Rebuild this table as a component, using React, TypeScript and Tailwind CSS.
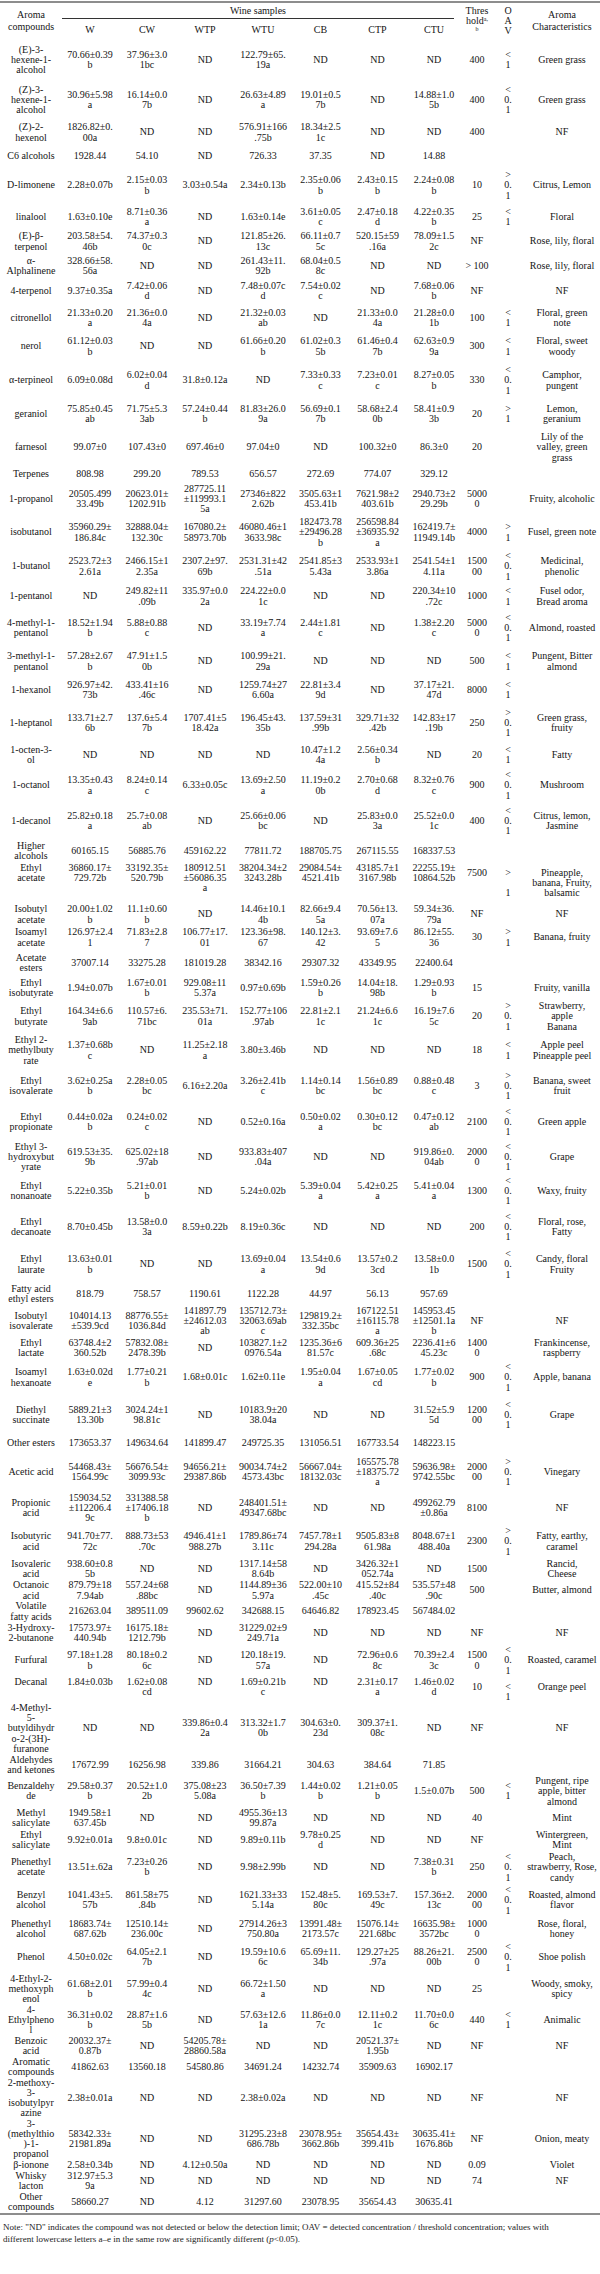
type Row = { h: number; c: string[]; top?: boolean }

const rows: Row[] = [
  { h: 42, c: ["(E)-3-\nhexene-1-\nalcohol", "70.66±0.39\nb", "37.96±3.0\n1bc", "ND", "122.79±65.\n19a", "ND", "ND", "ND", "400", "<\n1", "Green grass"] },
  { h: 38, c: ["(Z)-3-\nhexene-1-\nalcohol", "30.96±5.98\na", "16.14±0.0\n7b", "ND", "26.63±4.89\na", "19.01±0.5\n7b", "ND", "14.88±1.0\n5b", "400", "<\n0.\n1", "Green grass"] },
  { h: 27, c: ["(Z)-2-\nhexenol", "1826.82±0.\n00a", "ND", "ND", "576.91±166\n.75b", "18.34±2.5\n1c", "ND", "ND", "400", "", "NF"] },
  { h: 20, c: ["C6 alcohols", "1928.44", "54.10", "ND", "726.33", "37.35", "ND", "14.88", "", "", ""] },
  { h: 39, c: ["D-limonene", "2.28±0.07b", "2.15±0.03\nb", "3.03±0.54a", "2.34±0.13b", "2.35±0.06\nb", "2.43±0.15\nb", "2.24±0.08\nb", "10", ">\n0.\n1", "Citrus, Lemon"] },
  { h: 24, c: ["linalool", "1.63±0.10e", "8.71±0.36\na", "ND", "1.63±0.14e", "3.61±0.05\nc", "2.47±0.18\nd", "4.22±0.35\nb", "25", "<\n1", "Floral"] },
  { h: 25, c: ["(E)-β-\nterpenol", "203.58±54.\n46b", "74.37±0.3\n0c", "ND", "121.85±26.\n13c", "66.11±0.7\n5c", "520.15±59\n.16a", "78.09±1.5\n2c", "NF", "", "Rose, lily, floral"] },
  { h: 24, c: ["α-\nAlphalinene", "328.66±58.\n56a", "ND", "ND", "261.43±11.\n92b", "68.04±0.5\n8c", "ND", "ND", "> 100", "", "Rose, lily, floral"] },
  { h: 26, c: ["4-terpenol", "9.37±0.35a", "7.42±0.06\nd", "ND", "7.48±0.07c\nd", "7.54±0.02\nc", "ND", "7.68±0.06\nb", "NF", "", "NF"] },
  { h: 28, c: ["citronellol", "21.33±0.20\na", "21.36±0.0\n4a", "ND", "21.32±0.03\nab", "ND", "21.33±0.0\n4a", "21.28±0.0\n1b", "100", "<\n1", "Floral, green\nnote"] },
  { h: 29, c: ["nerol", "61.12±0.03\nb", "ND", "ND", "61.66±0.20\nb", "61.02±0.3\n5b", "61.46±0.4\n7b", "62.63±0.9\n9a", "300", "<\n1", "Floral, sweet\nwoody"] },
  { h: 39, c: ["α-terpineol", "6.09±0.08d", "6.02±0.04\nd", "31.8±0.12a", "ND", "7.33±0.33\nc", "7.23±0.01\nc", "8.27±0.05\nb", "330", "<\n0.\n1", "Camphor,\npungent"] },
  { h: 28, c: ["geraniol", "75.85±0.45\nab", "71.75±5.3\n3ab", "57.24±0.44\nb", "81.83±26.0\n9a", "56.69±0.1\n7b", "58.68±2.4\n0b", "58.41±0.9\n3b", "20", ">\n1", "Lemon,\ngeranium"] },
  { h: 39, c: ["farnesol", "99.07±0", "107.43±0", "697.46±0", "97.04±0", "ND", "100.32±0", "86.3±0", "20", "", "Lily of the\nvalley, green\ngrass"] },
  { h: 15, c: ["Terpenes", "808.98", "299.20", "789.53", "656.57", "272.69", "774.07", "329.12", "", "", ""] },
  { h: 34, c: ["1-propanol", "20505.499\n33.49b", "20623.01±\n1202.91b", "287725.11\n±119993.1\n5a", "27346±822\n2.62b", "3505.63±1\n453.41b", "7621.98±2\n403.61b", "2940.73±2\n29.29b", "5000\n0", "", "Fruity, alcoholic"] },
  { h: 33, c: ["isobutanol", "35960.29±\n186.84c", "32888.04±\n132.30c", "167080.2±\n58973.70b", "46080.46±1\n3633.98c", "182473.78\n±29496.28\nb", "256598.84\n±36935.92\na", "162419.7±\n11949.14b", "4000", ">\n1", "Fusel, green note"] },
  { h: 35, c: ["1-butanol", "2523.72±3\n2.61a", "2466.15±1\n2.35a", "2307.2±97.\n69b", "2531.31±42\n.51a", "2541.85±3\n5.43a", "2533.93±1\n3.86a", "2541.54±1\n4.11a", "1500\n00", "<\n0.\n1", "Medicinal,\nphenolic"] },
  { h: 25, c: ["1-pentanol", "ND", "249.82±11\n.09b", "335.97±0.0\n2a", "224.22±0.0\n1c", "ND", "ND", "220.34±10\n.72c", "1000", "<\n1", "Fusel odor,\nBread aroma"] },
  { h: 38, c: ["4-methyl-1-\npentanol", "18.52±1.94\nb", "5.88±0.88\nc", "ND", "33.19±7.74\na", "2.44±1.81\nc", "ND", "1.38±2.20\nc", "5000\n0", "<\n0.\n1", "Almond, roasted"] },
  { h: 29, c: ["3-methyl-1-\npentanol", "57.28±2.67\nb", "47.91±1.5\n0b", "ND", "100.99±21.\n29a", "ND", "ND", "ND", "500", "<\n1", "Pungent, Bitter\nalmond"] },
  { h: 28, c: ["1-hexanol", "926.97±42.\n73b", "433.41±16\n.46c", "ND", "1259.74±27\n6.60a", "22.81±3.4\n9d", "ND", "37.17±21.\n47d", "8000", "<\n1", ""] },
  { h: 38, c: ["1-heptanol", "133.71±2.7\n6b", "137.6±5.4\n7b", "1707.41±5\n18.42a", "196.45±43.\n35b", "137.59±31\n.99b", "329.71±32\n.42b", "142.83±17\n.19b", "250", ">\n0.\n1", "Green grass,\nfruity"] },
  { h: 26, c: ["1-octen-3-\nol", "ND", "ND", "ND", "ND", "10.47±1.2\n4a", "2.56±0.34\nb", "ND", "20", "<\n1", "Fatty"] },
  { h: 35, c: ["1-octanol", "13.35±0.43\na", "8.24±0.14\nc", "6.33±0.05c", "13.69±2.50\na", "11.19±0.2\n0b", "2.70±0.68\nd", "8.32±0.76\nc", "900", "<\n0.\n1", "Mushroom"] },
  { h: 36, c: ["1-decanol", "25.82±0.18\na", "25.7±0.08\nab", "ND", "25.66±0.06\nbc", "ND", "25.83±0.0\n3a", "25.52±0.0\n1c", "400", "<\n0.\n1", "Citrus, lemon,\nJasmine"] },
  { h: 24, c: ["Higher\nalcohols", "60165.15", "56885.76", "459162.22", "77811.72", "188705.75", "267115.55", "168337.53", "", "", ""] },
  { h: 41, top: true, c: ["Ethyl\nacetate", "36860.17±\n729.72b", "33192.35±\n520.79b", "180912.51\n±56086.35\na", "38204.34±2\n3243.28b", "29084.54±\n4521.41b", "43185.7±1\n3167.98b", "22255.19±\n10864.52b", "7500", ">\n\n1", "Pineapple,\nbanana, Fruity,\nbalsamic"] },
  { h: 21, c: ["Isobutyl\nacetate", "20.00±1.02\nb", "11.1±0.60\nb", "ND", "14.46±10.1\n4b", "82.66±9.4\n5a", "70.56±13.\n07a", "59.34±36.\n79a", "NF", "", "NF"] },
  { h: 25, c: ["Isoamyl\nacetate", "126.97±2.4\n1", "71.83±2.8\n7", "106.77±17.\n01", "123.36±98.\n67", "140.12±3.\n42", "93.69±7.6\n5", "86.12±55.\n36", "30", ">\n1", "Banana, fruity"] },
  { h: 26, c: ["Acetate\nesters", "37007.14", "33275.28", "181019.28", "38342.16", "29307.32", "43349.95", "22400.64", "", "", ""] },
  { h: 24, c: ["Ethyl\nisobutyrate", "1.94±0.07b", "1.67±0.01\nb", "929.08±11\n5.37a", "0.97±0.69b", "1.59±0.26\nb", "14.04±18.\n98b", "1.29±0.93\nb", "15", "", "Fruity, vanilla"] },
  { h: 33, c: ["Ethyl\nbutyrate", "164.34±6.6\n9ab", "110.57±6.\n71bc", "235.53±71.\n01a", "152.77±106\n.97ab", "22.81±2.1\n1c", "21.24±6.6\n1c", "16.19±7.6\n5c", "20", ">\n0.\n1", "Strawberry,\napple\nBanana"] },
  { h: 35, c: ["Ethyl 2-\nmethylbuty\nrate", "1.37±0.68b\nc", "ND", "11.25±2.18\na", "3.80±3.46b", "ND", "ND", "ND", "18", "<\n1", "Apple peel\nPineapple peel"] },
  { h: 36, c: ["Ethyl\nisovalerate", "3.62±0.25a\nb", "2.28±0.05\nbc", "6.16±2.20a", "3.26±2.41b\nc", "1.14±0.14\nbc", "1.56±0.89\nbc", "0.88±0.48\nc", "3", ">\n0.\n1", "Banana, sweet\nfruit"] },
  { h: 36, c: ["Ethyl\npropionate", "0.44±0.02a\nb", "0.24±0.02\nc", "ND", "0.52±0.16a", "0.50±0.02\na", "0.30±0.12\nbc", "0.47±0.12\nab", "2100", "<\n0.\n1", "Green apple"] },
  { h: 34, c: ["Ethyl 3-\nhydroxybut\nyrate", "619.53±35.\n9b", "625.02±18\n.97ab", "ND", "933.83±407\n.04a", "ND", "ND", "919.86±0.\n04ab", "2000\n0", "<\n0.\n1", "Grape"] },
  { h: 34, c: ["Ethyl\nnonanoate", "5.22±0.35b", "5.21±0.01\nb", "ND", "5.24±0.02b", "5.39±0.04\na", "5.42±0.25\na", "5.41±0.04\na", "1300", "<\n0.\n1", "Waxy, fruity"] },
  { h: 38, c: ["Ethyl\ndecanoate", "8.70±0.45b", "13.58±0.0\n3a", "8.59±0.22b", "8.19±0.36c", "ND", "ND", "ND", "200", "<\n0.\n1", "Floral, rose,\nFatty"] },
  { h: 37, c: ["Ethyl\nlaurate", "13.63±0.01\nb", "ND", "ND", "13.69±0.04\na", "13.54±0.6\n9d", "13.57±0.2\n3cd", "13.58±0.0\n1b", "1500", "<\n0.\n1", "Candy, floral\nFruity"] },
  { h: 22, c: ["Fatty acid\nethyl esters", "818.79", "758.57", "1190.61", "1122.28", "44.97", "56.13", "957.69", "", "", ""] },
  { h: 32, c: ["Isobutyl\nisovalerate", "104014.13\n±539.9cd", "88776.55±\n1036.84d", "141897.79\n±24612.03\nab", "135712.73±\n32063.69ab\nc", "129819.2±\n332.35bc", "167122.51\n±16115.78\na", "145953.45\n±12501.1a\nb", "NF", "", "NF"] },
  { h: 22, c: ["Ethyl\nlactate", "63748.4±2\n360.52b", "57832.08±\n2478.39b", "ND", "103827.1±2\n0976.54a", "1235.36±6\n81.57c", "609.36±25\n.68c", "2236.41±6\n45.23c", "1400\n0", "", "Frankincense,\nraspberry"] },
  { h: 37, c: ["Isoamyl\nhexanoate", "1.63±0.02d\ne", "1.77±0.21\nb", "1.68±0.01c", "1.62±0.11e", "1.95±0.04\na", "1.67±0.05\ncd", "1.77±0.02\nb", "900", "<\n0.\n1", "Apple, banana"] },
  { h: 38, c: ["Diethyl\nsuccinate", "5889.21±3\n13.30b", "3024.24±1\n98.81c", "ND", "10183.9±20\n38.04a", "ND", "ND", "31.52±5.9\n5d", "1200\n00", "<\n0.\n1", "Grape"] },
  { h: 19, c: ["Other esters", "173653.37", "149634.64", "141899.47", "249725.35", "131056.51", "167733.54", "148223.15", "", "", ""] },
  { h: 38, c: ["Acetic acid", "54468.43±\n1564.99c", "56676.54±\n3099.93c", "94656.21±\n29387.86b", "90034.74±2\n4573.43bc", "56667.04±\n18132.03c", "165575.78\n±18375.72\na", "59636.98±\n9742.55bc", "2000\n00", ">\n0.\n1", "Vinegary"] },
  { h: 34, c: ["Propionic\nacid", "159034.52\n±112206.4\n9c", "331388.58\n±17406.18\nb", "ND", "248401.51±\n49347.68bc", "ND", "ND", "499262.79\n±0.86a", "8100", "", "NF"] },
  { h: 33, c: ["Isobutyric\nacid", "941.70±77.\n72c", "888.73±53\n.70c", "4946.41±1\n988.27b", "1789.86±74\n3.11c", "7457.78±1\n294.28a", "9505.83±8\n61.98a", "8048.67±1\n488.40a", "2300", ">\n0.\n1", "Fatty, earthy,\ncaramel"] },
  { h: 22, c: ["Isovaleric\nacid", "938.60±0.8\n5b", "ND", "ND", "1317.14±58\n8.64b", "ND", "3426.32±1\n052.74a", "ND", "1500", "", "Rancid,\nCheese"] },
  { h: 21, c: ["Octanoic\nacid", "879.79±18\n7.94ab", "557.24±68\n.88bc", "ND", "1144.89±36\n5.97a", "522.00±10\n.45c", "415.52±84\n.40c", "535.57±48\n.90c", "500", "", "Butter, almond"] },
  { h: 21, c: ["Volatile\nfatty acids", "216263.04", "389511.09", "99602.62", "342688.15", "64646.82", "178923.45", "567484.02", "", "", ""] },
  { h: 22, c: ["3-Hydroxy-\n2-butanone", "17573.97±\n440.94b", "16175.18±\n1212.79b", "ND", "31229.02±9\n249.71a", "ND", "ND", "ND", "NF", "", "NF"] },
  { h: 33, c: ["Furfural", "97.18±1.28\nb", "80.18±0.2\n6c", "ND", "120.18±19.\n57a", "ND", "72.96±0.6\n8c", "70.39±2.4\n3c", "1500\n0", "<\n0.\n1", "Roasted, caramel"] },
  { h: 21, top: true, c: ["Decanal", "1.84±0.03b", "1.62±0.08\ncd", "ND", "1.69±0.21b\nc", "ND", "2.31±0.17\na", "1.46±0.02\nd", "10", "<\n1", "Orange peel"] },
  { h: 52, c: ["4-Methyl-\n5-\nbutyldihydr\no-2-(3H)-\nfuranone", "ND", "ND", "339.86±0.4\n2a", "313.32±1.7\n0b", "304.63±0.\n23d", "309.37±1.\n08c", "ND", "NF", "", "NF"] },
  { h: 21, c: ["Aldehydes\nand ketones", "17672.99", "16256.98", "339.86", "31664.21", "304.63", "384.64", "71.85", "", "", ""] },
  { h: 32, c: ["Benzaldehy\nde", "29.58±0.37\nb", "20.52±1.0\n2b", "375.08±23\n5.08a", "36.50±7.39\nb", "1.44±0.02\nb", "1.21±0.05\nb", "1.5±0.07b", "500", "<\n1", "Pungent, ripe\napple, bitter\nalmond"] },
  { h: 22, c: ["Methyl\nsalicylate", "1949.58±1\n637.45b", "ND", "ND", "4955.36±13\n99.87a", "ND", "ND", "ND", "40", "", "Mint"] },
  { h: 22, c: ["Ethyl\nsalicylate", "9.92±0.01a", "9.8±0.01c", "ND", "9.89±0.11b", "9.78±0.25\nd", "ND", "ND", "NF", "", "Wintergreen,\nMint"] },
  { h: 32, c: ["Phenethyl\nacetate", "13.51±.62a", "7.23±0.26\nb", "ND", "9.98±2.99b", "ND", "ND", "7.38±0.31\nb", "250", "<\n0.\n1", "Peach,\nstrawberry, Rose,\ncandy"] },
  { h: 34, c: ["Benzyl\nalcohol", "1041.43±5.\n57b", "861.58±75\n.84b", "ND", "1621.33±33\n5.14a", "152.48±5.\n80c", "169.53±7.\n49c", "157.36±2.\n13c", "2000\n00", "<\n0.\n1", "Roasted, almond\nflavor"] },
  { h: 24, c: ["Phenethyl\nalcohol", "18683.74±\n687.62b", "12510.14±\n236.00c", "ND", "27914.26±3\n750.80a", "13991.48±\n2173.57c", "15076.14±\n221.68bc", "16635.98±\n3572bc", "1000\n0", "", "Rose, floral,\nhoney"] },
  { h: 32, c: ["Phenol", "4.50±0.02c", "64.05±2.1\n7b", "ND", "19.59±10.6\n6c", "65.69±11.\n34b", "129.27±25\n.97a", "88.26±21.\n00b", "2500\n0", "<\n0.\n1", "Shoe polish"] },
  { h: 31, c: ["4-Ethyl-2-\nmethoxyph\nenol", "61.68±2.01\nb", "57.99±0.4\n4c", "ND", "66.72±1.50\na", "ND", "ND", "ND", "25", "", "Woody, smoky,\nspicy"] },
  { h: 31, c: ["4-\nEthylpheno\nl", "36.31±0.02\nb", "28.87±1.6\n5b", "ND", "57.63±12.6\n1a", "11.86±0.0\n7c", "12.11±0.2\n1c", "11.70±0.0\n6c", "440", "<\n1", "Animalic"] },
  { h: 21, c: ["Benzoic\nacid", "20032.37±\n0.87b", "ND", "54205.78±\n28860.58a", "ND", "ND", "20521.37±\n1.95b", "ND", "NF", "", "NF"] },
  { h: 21, c: ["Aromatic\ncompounds", "41862.63", "13560.18", "54580.86", "34691.24", "14232.74", "35909.63", "16902.17", "", "", ""] },
  { h: 41, c: ["2-methoxy-\n3-\nisobutylpyr\nazine", "2.38±0.01a", "ND", "ND", "2.38±0.02a", "ND", "ND", "ND", "NF", "", "NF"] },
  { h: 41, c: ["3-\n(methylthio\n)-1-\npropanol", "58342.33±\n21981.89a", "ND", "ND", "31295.23±8\n686.78b", "23078.95±\n3662.86b", "35654.43±\n399.41b", "30635.41±\n1676.86b", "NF", "", "Onion, meaty"] },
  { h: 11, c: ["β-ionone", "2.58±0.34b", "ND", "4.12±0.50a", "ND", "ND", "ND", "ND", "0.09", "", "Violet"] },
  { h: 21, c: ["Whisky\nlacton", "312.97±5.3\n9a", "ND", "ND", "ND", "ND", "ND", "ND", "74", "", "NF"] },
  { h: 22, c: ["Other\ncompounds", "58660.27", "ND", "4.12", "31297.60", "23078.95", "35654.43", "30635.41", "", "", ""] },
]

const samples = ["W", "CW", "WTP", "WTU", "CB", "CTP", "CTU"]

export default function App() {
  return (
    <div className="w-[600px] bg-white pt-px text-[#151515] font-['Liberation_Serif',serif] text-[10px] leading-[10.2px]">
      <div className="border-y-2 border-[#8d8d8d]">
        <table className="w-[600px] table-fixed">
          <colgroup>
            <col className="w-[62px]" />
            <col className="w-[56px]" />
            <col className="w-[58px]" />
            <col className="w-[58px]" />
            <col className="w-[58px]" />
            <col className="w-[57px]" />
            <col className="w-[57px]" />
            <col className="w-[56px]" />
            <col className="w-[30px]" />
            <col className="w-[32px]" />
            <col className="w-[76px]" />
          </colgroup>
          <thead>
            <tr className="h-[19px]">
              <th rowSpan={2} className="font-normal align-middle text-center leading-[12px]">
                Aroma
                <br />
                compounds
              </th>
              <th colSpan={7} className="font-normal align-top pt-[3px]">
                <div className="border-b border-[#333] mr-2 pb-[2px]">Wine samples</div>
              </th>
              <th rowSpan={2} className="font-normal align-middle text-center">
                Thres
                <br />
                hold<sup className="text-[6px]">a,</sup>
                <br />
                <sup className="text-[6px]">b</sup>
              </th>
              <th rowSpan={2} className="font-normal align-middle text-center">
                O
                <br />A<br />V
              </th>
              <th rowSpan={2} className="font-normal align-middle text-center leading-[12px]">
                Aroma
                <br />
                Characteristics
              </th>
            </tr>
            <tr className="h-[17px]">
              {samples.map((s) => (
                <th key={s} className="font-normal align-middle text-center">
                  {s}
                </th>
              ))}
            </tr>
          </thead>
          <tbody>
            {rows.map((r, i) => (
              <tr key={i} style={{ height: r.h }}>
                {r.c.map((cell, j) => (
                  <td
                    key={j}
                    className={`p-0 text-center whitespace-pre ${r.top ? "align-top" : "align-middle"}`}
                  >
                    {r.top && j >= 8 ? <div className="pt-[5px]">{cell}</div> : cell}
                  </td>
                ))}
              </tr>
            ))}
          </tbody>
        </table>
      </div>
      <p className="px-[3px] pt-[6px] text-[9px] leading-[12px] text-[#222] whitespace-pre">
        {'Note: "ND" indicates the compound was not detected or below the detection limit; OAV = detected concentration / threshold concentration; values with\ndifferent lowercase letters a–e in the same row are significantly different ('}
        <i>p</i>
        {"<0.05)."}
      </p>
    </div>
  )
}
